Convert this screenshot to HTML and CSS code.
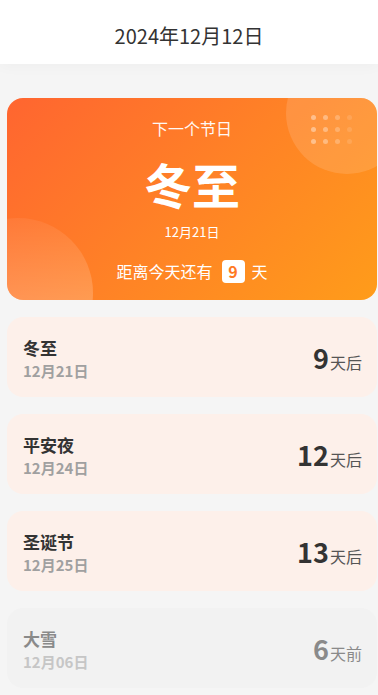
FILE: index.html
```html
<!DOCTYPE html>
<html lang="zh-CN">
<head>
    <meta charset="UTF-8">
    <meta name="viewport" content="width=device-width, initial-scale=1.0">
    <title>节日倒计时</title>
    <link rel="stylesheet" href="styles.css">
</head>
<body>
    <div class="header">2024年12月12日</div>

    <div class="hero">
        <div class="hero-circle top"></div>
        <div class="hero-circle bottom"></div>
        <div class="dots">
            <span></span><span></span><span></span><span></span>
            <span></span><span></span><span></span><span></span>
            <span></span><span></span><span></span><span></span>
        </div>
        <div class="hero-label">下一个节日</div>
        <div class="hero-name">冬至</div>
        <div class="hero-date">12月21日</div>
        <div class="hero-count">距离今天还有 <span class="badge">9</span> 天</div>
    </div>

    <div class="list">
        <div class="item">
            <div class="item-info">
                <div class="item-name">冬至</div>
                <div class="item-date">12月21日</div>
            </div>
            <div class="item-days"><b>9</b>天后</div>
        </div>
        <div class="item">
            <div class="item-info">
                <div class="item-name">平安夜</div>
                <div class="item-date">12月24日</div>
            </div>
            <div class="item-days"><b>12</b>天后</div>
        </div>
        <div class="item">
            <div class="item-info">
                <div class="item-name">圣诞节</div>
                <div class="item-date">12月25日</div>
            </div>
            <div class="item-days"><b>13</b>天后</div>
        </div>
        <div class="item past">
            <div class="item-info">
                <div class="item-name">大雪</div>
                <div class="item-date">12月06日</div>
            </div>
            <div class="item-days"><b>6</b>天前</div>
        </div>
    </div>
</body>
</html>
```

FILE: styles.css
```css
body {
    font-family: "Noto Sans CJK SC", "Noto Sans", sans-serif;
    background-color: #f5f5f5;
    margin: 0;
    width: 378px;
    overflow: hidden;
}

.header {
    background-color: #fff;
    height: 64px;
    line-height: 72px;
    text-align: center;
    font-size: 20px;
    color: #333;
    box-shadow: 0 2px 14px rgba(0, 0, 0, 0.03);
}

.hero {
    position: relative;
    overflow: hidden;
    margin: 34px 0 0 7px;
    width: 370px;
    height: 202px;
    border-radius: 16px;
    background: linear-gradient(135deg, #ff6530 0%, #ff8226 50%, #ff9c1a 100%);
    color: #fff;
    text-align: center;
    display: flex;
    flex-direction: column;
    align-items: center;
}

    .hero-circle {
        position: absolute;
        border-radius: 50%;
    }

        .hero-circle.top {
            width: 122px;
            height: 122px;
            top: -46px;
            right: -31px;
            background: rgba(255, 255, 255, 0.13);
        }

        .hero-circle.bottom {
            width: 150px;
            height: 150px;
            top: 120px;
            left: -64px;
            background: linear-gradient(180deg, rgba(255, 255, 255, 0.06), rgba(255, 255, 255, 0.32));
        }

    .dots {
        position: absolute;
        top: 17px;
        left: 304px;
        display: grid;
        grid-template-columns: repeat(4, 6px);
        gap: 7px 6px;
    }

        .dots span {
            width: 5px;
            height: 5px;
            border-radius: 50%;
            background: rgba(255, 255, 255, 0.4);
        }

            .dots span:nth-child(4n+2) { opacity: 0.85; }
            .dots span:nth-child(4n+3) { opacity: 0.6; }
            .dots span:nth-child(4n) { opacity: 0.3; }

.hero-label {
    position: relative;
    margin-top: 18px;
    font-size: 16px;
    line-height: 24px;
    opacity: 0.95;
}

.hero-name {
    position: relative;
    margin-top: 13px;
    font-size: 48px;
    font-weight: 700;
    line-height: 60px;
}

.hero-date {
    position: relative;
    margin-top: 10px;
    font-size: 13px;
    line-height: 18px;
}

.hero-count {
    position: relative;
    margin-top: 18px;
    font-size: 16px;
    line-height: 24px;
    display: flex;
    align-items: center;
    gap: 4px;
}

    .badge {
        display: inline-block;
        background: #fff;
        color: #ff7a25;
        font-weight: 700;
        width: 23px;
        height: 23px;
        line-height: 23px;
        border-radius: 4px;
        margin: 0 3px 0 5px;
    }

.list {
    margin: 17px 0 0 7px;
    width: 370px;
}

.item {
    height: 80px;
    box-sizing: border-box;
    margin-bottom: 17px;
    padding: 0 15px 0 16px;
    border-radius: 16px;
    background-color: #fdf0ea;
    display: flex;
    justify-content: space-between;
    align-items: center;
}

    .item-info {
        margin-top: 3px;
    }

    .item-name {
        font-size: 17px;
        font-weight: 700;
        color: #333;
        line-height: 24px;
    }

    .item-date {
        font-size: 15px;
        font-weight: 700;
        color: #a0a0a0;
        line-height: 22px;
    }

    .item-days {
        font-size: 16px;
        color: #555;
    }

        .item-days b {
            font-size: 27px;
            color: #333;
            margin-right: 1px;
        }

    .item.past {
        background-color: #f2f2f2;
    }

        .item.past .item-name,
        .item.past .item-days,
        .item.past .item-days b {
            color: #8a8a8a;
        }

        .item.past .item-date {
            color: #c6c6c6;
        }
```
